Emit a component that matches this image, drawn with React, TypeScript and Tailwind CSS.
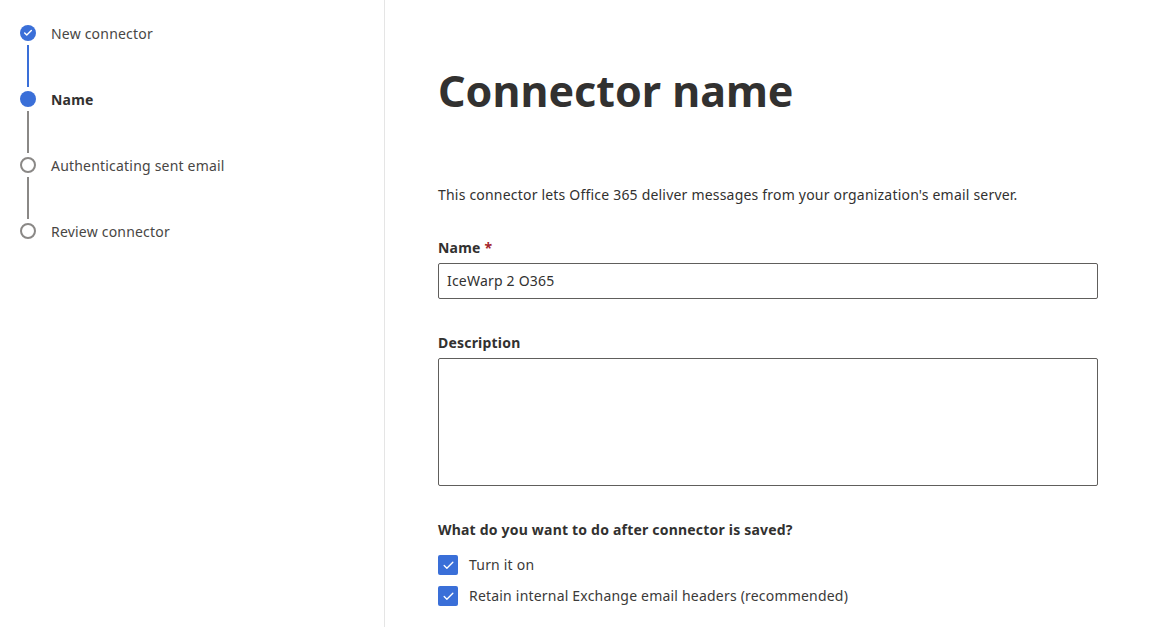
import { Check } from "lucide-react";

const font = { fontFamily: "'Segoe UI', 'Noto Sans', sans-serif" };

type StepState = "done" | "current" | "todo";

function StepDot({ state }: { state: StepState }) {
  if (state === "done") {
    return (
      <div className="w-4 h-4 rounded-full bg-[#3a6fd8] flex items-center justify-center">
        <Check className="w-[10px] h-[10px] text-white" strokeWidth={3.5} />
      </div>
    );
  }
  if (state === "current") {
    return <div className="w-4 h-4 rounded-full bg-[#3a6fd8]"></div>;
  }
  return <div className="w-4 h-4 rounded-full border-2 border-[#8a8886] bg-white"></div>;
}

const steps: { label: string; state: StepState }[] = [
  { label: "New connector", state: "done" },
  { label: "Name", state: "current" },
  { label: "Authenticating sent email", state: "todo" },
  { label: "Review connector", state: "todo" },
];

function CheckRow({ label }: { label: string }) {
  return (
    <label className="flex items-center gap-[11px] h-5">
      <span className="w-5 h-5 rounded-[2px] bg-[#3a6fd8] flex items-center justify-center">
        <Check className="w-[13px] h-[13px] text-white" strokeWidth={2.5} />
      </span>
      <span className="text-sm tracking-[0.2px] text-[#3b3a39]">{label}</span>
    </label>
  );
}

export default function App() {
  return (
    <div className="w-[1171px] h-[627px] bg-white flex overflow-hidden" style={font}>
      <aside className="w-[385px] shrink-0 border-r border-[#e5e5e5] pt-[25px] pl-5">
        {steps.map((s, i) => (
          <div key={s.label}>
            <div className="flex items-center gap-[15px] h-4">
              <StepDot state={s.state} />
              <span
                className={
                  s.state === "current"
                    ? "text-sm font-bold text-[#323130] leading-5 tracking-[0.2px] translate-y-px"
                    : "text-sm text-[#484644] leading-5 tracking-[0.2px] translate-y-px"
                }
              >
                {s.label}
              </span>
            </div>
            {i < steps.length - 1 && (
              <div
                className={
                  "ml-[7px] w-[2px] h-[42px] my-1 " +
                  (i === 0 ? "bg-[#3a6fd8]" : "bg-[#8a8886]")
                }
              ></div>
            )}
          </div>
        ))}
      </aside>

      <main className="flex-1 pl-[53px] pt-[63px] tracking-[0.2px]">
        <h1 className="text-[43px] font-bold leading-[55px] tracking-normal text-[#323130]">
          Connector name
        </h1>

        <p className="mt-[67px] text-sm leading-5 text-[#323130]">
          This connector lets Office 365 deliver messages from your organization's email server.
        </p>

        <div className="mt-[33px] text-sm leading-5 font-bold text-[#323130]">
          Name <span className="text-[#a4262c]">*</span>
        </div>
        <div className="mt-[5px] w-[660px] h-9 border border-[#605e5c] rounded-[2px] px-2 flex items-center text-sm text-[#323130]">
          IceWarp 2 O365
        </div>

        <div className="mt-[34px] text-sm leading-5 font-bold text-[#323130]">Description</div>
        <div className="mt-[5px] w-[660px] h-[128px] border border-[#605e5c] rounded-[2px]"></div>

        <div className="mt-[34px] text-sm leading-5 font-bold text-[#323130]">
          What do you want to do after connector is saved?
        </div>
        <div className="mt-[15px] flex flex-col gap-[11px]">
          <CheckRow label="Turn it on" />
          <CheckRow label="Retain internal Exchange email headers (recommended)" />
        </div>
      </main>
    </div>
  );
}
